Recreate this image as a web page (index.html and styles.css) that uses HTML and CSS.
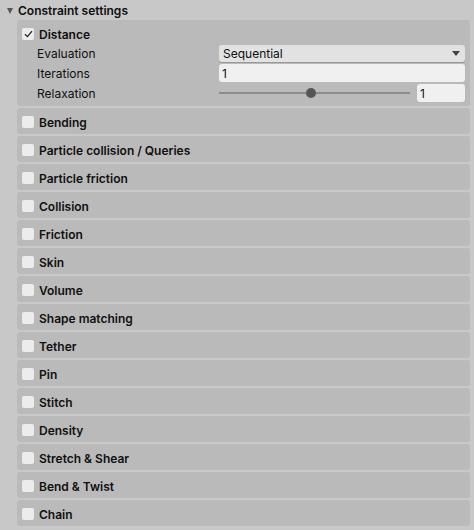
FILE: index.html
```html
<!DOCTYPE html>
<html lang="en">
<head>
    <meta charset="UTF-8">
    <title>Constraint settings</title>
    <link rel="stylesheet" href="styles.css">
</head>
<body>

<div class="inspector">
    <div class="foldout">
        <span class="foldout-arrow"></span>
        <span class="foldout-title">Constraint settings</span>
    </div>

    <div class="group">
        <div class="group-head">
            <span class="check checked">
                <svg width="9" height="8" viewBox="0 0 9 8"><path d="M1 4.2 L3.4 6.6 L8 1.2" fill="none" stroke="#222" stroke-width="1.3"/></svg>
            </span>
            <span class="group-name">Distance</span>
        </div>
        <div class="group-body">
            <div class="prop">
                <span class="prop-label">Evaluation</span>
                <div class="dropdown">
                    <span>Sequential</span>
                    <span class="dropdown-arrow"></span>
                </div>
            </div>
            <div class="prop">
                <span class="prop-label">Iterations</span>
                <div class="field">1</div>
            </div>
            <div class="prop">
                <span class="prop-label">Relaxation</span>
                <div class="slider">
                    <div class="slider-track">
                        <span class="slider-knob"></span>
                    </div>
                    <div class="field small">1</div>
                </div>
            </div>
        </div>
    </div>

    <div id="groups"></div>
</div>

<script>
    const names = ['Bending', 'Particle collision / Queries', 'Particle friction', 'Collision',
        'Friction', 'Skin', 'Volume', 'Shape matching', 'Tether', 'Pin', 'Stitch', 'Density',
        'Stretch & Shear', 'Bend & Twist', 'Chain'];

    const container = document.getElementById('groups');
    names.forEach(name => {
        const group = document.createElement('div');
        group.classList.add('group');
        group.innerHTML = `
            <div class="group-head">
                <span class="check"></span>
                <span class="group-name"></span>
            </div>
        `;
        group.querySelector('.group-name').textContent = name;
        container.appendChild(group);
    });
</script>

</body>
</html>
```

FILE: styles.css
```css
body {
    margin: 0;
    padding: 0;
    background-color: #c8c8c8;
    color: #101010;
    font-family: Inter, "Noto Sans", sans-serif;
    font-size: 12px;
}
.inspector {
    width: 474px;
    height: 530px;
    overflow: hidden;
    padding: 0 4px 0 17px;
    box-sizing: border-box;
}
.foldout {
    height: 20px;
    display: flex;
    align-items: center;
    margin-left: -17px;
}
.foldout-arrow {
    width: 0;
    height: 0;
    margin: 1px 5px 0 7px;
    border-left: 3.5px solid transparent;
    border-right: 3.5px solid transparent;
    border-top: 6px solid #555;
}
.foldout-title {
    font-weight: 600;
}
.group {
    background-color: #bababa;
    border-radius: 3px;
    margin-bottom: 2px;
    padding: 0 5px;
}
.group-head {
    height: 26px;
    display: flex;
    align-items: center;
    padding-top: 2px;
    box-sizing: border-box;
}
.check {
    width: 12px;
    height: 12px;
    background-color: #ececec;
    border-radius: 2px;
    margin-right: 5px;
    display: flex;
    align-items: center;
    justify-content: center;
}
.group-name {
    font-weight: 600;
}
.group-body {
    margin-top: -3px;
    padding: 0 0 3px 15px;
}
.prop {
    height: 20px;
    display: flex;
    align-items: center;
}
.prop-label {
    width: 182px;
    flex-shrink: 0;
}
.dropdown {
    flex: 1;
    height: 17px;
    background-color: #e2e2e2;
    border-radius: 3px;
    box-shadow: 0 1px 0 #999;
    display: flex;
    align-items: center;
    justify-content: space-between;
    padding: 0 4px;
    box-sizing: border-box;
}
.dropdown-arrow {
    width: 0;
    height: 0;
    border-left: 4px solid transparent;
    border-right: 4px solid transparent;
    border-top: 5px solid #444;
    margin-right: 1px;
}
.field {
    flex: 1;
    height: 18px;
    background-color: #f0f0f0;
    border-radius: 3px;
    display: flex;
    align-items: center;
    padding: 0 3px;
    box-sizing: border-box;
}
.field.small {
    flex: 0 0 48px;
}
.slider {
    flex: 1;
    display: flex;
    align-items: center;
    gap: 7px;
}
.slider-track {
    flex: 1;
    height: 2px;
    background-color: #8c8c8c;
    position: relative;
}
.slider-knob {
    position: absolute;
    left: 87px;
    top: -4px;
    width: 10px;
    height: 10px;
    border-radius: 50%;
    background-color: #555;
}
```
